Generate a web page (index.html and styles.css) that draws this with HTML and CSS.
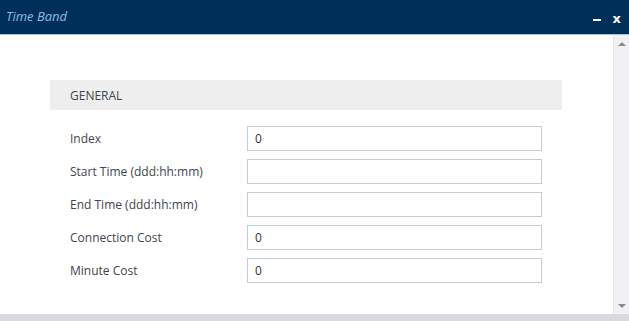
FILE: index.html
```html
<!DOCTYPE html>
<html>
<head>
<meta charset="utf-8">
<link rel="stylesheet" href="styles.css">
</head>
<body>
<div class="dialog">
  <div class="titlebar">
    <span class="title">Time Band</span>
    <div class="controls">
      <span class="min"></span>
      <span class="ctl close">x</span>
    </div>
  </div>
  <div class="body">
    <div class="main">
      <div class="section">
        <div class="section-head">GENERAL</div>
        <div class="rows">
          <div class="row"><span class="label">Index</span><input class="field" type="text" value="0"></div>
          <div class="row"><span class="label">Start Time (ddd:hh:mm)</span><input class="field" type="text" value=""></div>
          <div class="row"><span class="label">End Time (ddd:hh:mm)</span><input class="field" type="text" value=""></div>
          <div class="row"><span class="label">Connection Cost</span><input class="field" type="text" value="0"></div>
          <div class="row"><span class="label">Minute Cost</span><input class="field" type="text" value="0"></div>
        </div>
      </div>
    </div>
    <div class="scrollbar">
      <span class="arrow up"></span>
      <span class="arrow down"></span>
    </div>
  </div>
  <div class="footer"></div>
</div>
</body>
</html>
```
FILE: styles.css
```css
html, body {
  margin: 0;
  padding: 0;
  background: #ffffff;
}
.dialog {
  width: 629px;
  height: 321px;
  display: flex;
  flex-direction: column;
  font-family: "Open Sans", "Liberation Sans", sans-serif;
}
.titlebar {
  height: 34px;
  background: #00305a;
  border-bottom: 1px solid #a9c2dc;
  display: flex;
  align-items: center;
  justify-content: space-between;
  padding: 0 0 0 6px;
  box-sizing: content-box;
}
.title {
  color: #8fb8e6;
  font-style: italic;
  font-size: 13px;
  margin-top: -3px;
}
.controls {
  display: flex;
  align-items: center;
  gap: 12px;
  padding-right: 8px;
  margin-top: 3px;
}
.min {
  width: 8px;
  height: 2px;
  background: #ffffff;
  margin-top: 3px;
}
.ctl {
  color: #ffffff;
  font-weight: bold;
  font-size: 13px;
  font-family: "DejaVu Sans", sans-serif;
}
.body {
  flex: 1;
  display: flex;
  min-height: 0;
}
.main {
  flex: 1;
  padding: 45px 0 0 50px;
}
.section {
  width: 512px;
}
.section-head {
  height: 30px;
  background: #eeeeee;
  color: #3c4650;
  font-size: 12px;
  display: flex;
  align-items: center;
  padding-left: 20px;
}
.rows {
  padding-top: 16px;
  display: flex;
  flex-direction: column;
  gap: 8px;
}
.row {
  display: flex;
  align-items: center;
  height: 25px;
}
.label {
  width: 177px;
  padding-left: 20px;
  color: #3c4650;
  font-size: 12px;
}
.field {
  width: 295px;
  height: 25px;
  box-sizing: border-box;
  border: 1px solid #c4ccd4;
  padding: 0 7px;
  margin: 0;
  font-family: "Open Sans", "Liberation Sans", sans-serif;
  font-size: 12px;
  color: #333333;
  outline: none;
}
.scrollbar {
  width: 15px;
  background: #f1f1f3;
  border-left: 1px solid #e6e6ea;
  display: flex;
  flex-direction: column;
  justify-content: space-between;
  align-items: center;
  padding: 7px 0 6px;
}
.arrow {
  width: 0;
  height: 0;
  border-left: 4px solid transparent;
  border-right: 4px solid transparent;
}
.arrow.up {
  border-bottom: 4px solid #8a8a8a;
}
.arrow.down {
  border-top: 4px solid #8a8a8a;
}
.footer {
  height: 7px;
  background: #d9dade;
}
```
